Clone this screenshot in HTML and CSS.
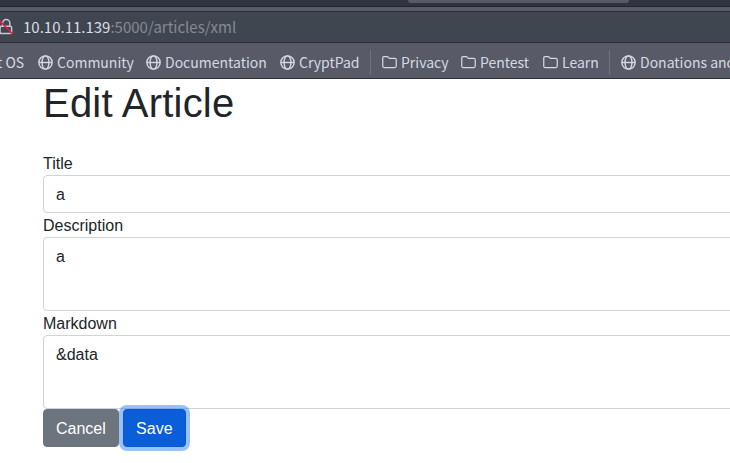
FILE: index.html
```
<!DOCTYPE html>
<html lang="en">
<head>
<meta charset="utf-8">
<title>Edit Article</title>
<link rel="stylesheet" href="styles.css">
</head>
<body>
<svg width="0" height="0" class="defs">
  <symbol id="globe" viewBox="0 0 16 16"><g fill="none" stroke="currentColor" stroke-width="1.5"><circle cx="8" cy="8" r="7.1"/><ellipse cx="8" cy="8" rx="3.7" ry="7.1"/><path d="M1 8h14"/></g></symbol>
  <symbol id="folder" viewBox="0 0 16 16"><path fill="none" stroke="currentColor" stroke-width="1.3" stroke-linejoin="round" d="M2.2 1.8h3.2c.7 0 1 .2 1.4.7l1 1.1h5.8c1 0 1.6.6 1.6 1.6v6.6c0 1-.6 1.6-1.6 1.6H2.4c-1 0-1.6-.6-1.6-1.6V3.2c0-.9.5-1.4 1.4-1.4z"/></symbol>
</svg>
<header class="browser">
  <div class="tabs"><div class="tab"></div></div>
  <div class="strip"></div>
  <div class="address">
    <svg class="lock" viewBox="0 0 14 18"><g fill="none" stroke="#c3c8d3" stroke-width="1.5"><path d="M2.6 8V5.2a3.6 3.6 0 0 1 7.2 0V8"/><rect x="0" y="8.2" width="11.6" height="7.4" rx="1.5"/></g><path d="M-2 1L12.8 16.2" stroke="#f0143c" stroke-width="1.5"/></svg>
    <span class="url"><b>10.10.11.139</b>:5000/articles/xml</span>
  </div>
  <nav class="bookmarks">
    <span class="item os">t OS</span>
    <span class="item community"><svg><use href="#globe"/></svg>Community</span>
    <span class="item documentation"><svg><use href="#globe"/></svg>Documentation</span>
    <span class="item cryptpad"><svg><use href="#globe"/></svg>CryptPad</span>
    <span class="separator"></span>
    <span class="item privacy"><svg><use href="#folder"/></svg>Privacy</span>
    <span class="item pentest"><svg><use href="#folder"/></svg>Pentest</span>
    <span class="item learn"><svg><use href="#folder"/></svg>Learn</span>
    <span class="separator"></span>
    <span class="item"><svg><use href="#globe"/></svg>Donations and</span>
  </nav>
</header>
<main>
  <h1>Edit Article</h1>
  <form>
    <label for="title">Title</label>
    <input id="title" type="text" value="a">
    <label for="description">Description</label>
    <textarea id="description">a</textarea>
    <label for="markdown">Markdown</label>
    <textarea id="markdown">&amp;data</textarea>
    <div class="actions">
      <a class="btn cancel">Cancel</a>
      <button class="btn save" type="button">Save</button>
    </div>
  </form>
</main>
</body>
</html>
```
FILE: styles.css
```
* { box-sizing: border-box; }
html, body { margin: 0; overflow: hidden; }
body {
  height: 463px;
  background: #fff;
  color: #212529;
  font: 16px/24px "Liberation Sans", Arial, sans-serif;
}
.defs { display: block; }
.browser {
  font-family: "Noto Sans CJK SC", "Noto Sans", sans-serif;
  color: #d3dae3;
}
.tabs { height: 7px; background: #2f343f; border-bottom: 1px solid #22252e; }
.tab {
  width: 221px;
  height: 3px;
  margin-left: 408px;
  background: #585a67;
  border-radius: 0 0 3px 3px;
}
.strip { height: 5px; background: #585a67; border-bottom: 1px solid #2b2e39; }
.address {
  display: flex;
  align-items: center;
  height: 31px;
  background: #404650;
  border-bottom: 1px solid #2b2e39;
}
.lock { width: 14px; height: 18px; margin-right: 9px; flex: none; overflow: visible; }
.url { font-size: 15px; color: #858a94; white-space: nowrap; }
.url b { font-weight: 400; color: #d8dde6; }
.bookmarks {
  display: flex;
  align-items: center;
  height: 36px;
  padding-top: 3px;
  background: #585a67;
  border-bottom: 1px solid #2b2e39;
  font-size: 14px;
  white-space: nowrap;
}
.item { display: flex; align-items: center; flex: none; gap: 4px; }
.item svg { width: 15px; height: 15px; flex: none; }
.os { width: 38px; text-indent: -3px; }
.community { width: 108px; }
.documentation { width: 134px; }
.cryptpad { width: 90px; }
.privacy { width: 79px; }
.pentest { width: 82px; }
.learn { width: 66px; }
.separator { width: 1px; height: 25px; margin-right: 11px; flex: none; background: #70727e; }
main { width: 100%; padding-left: 43px; overflow: hidden; }
h1 { margin: 0 0 24px; font-size: 40px; font-weight: 400; line-height: 48px; letter-spacing: .2px; }
form { display: flex; flex-direction: column; width: 1000px; }
label { height: 24px; padding-top: 1px; }
input, textarea {
  display: block;
  width: 100%;
  height: 38px;
  margin: 0;
  padding: 7px 12px 5px;
  border: 1px solid #ced4da;
  border-radius: 4px;
  background: #fff;
  color: #212529;
  font: inherit;
  resize: none;
  overflow: hidden;
}
textarea { height: 74px; }
.actions { display: flex; gap: 4px; padding-bottom: 10px; }
.btn {
  height: 38px;
  padding: 7px 12px 5px;
  border: 1px solid #6c757d;
  border-radius: 4px;
  background: #6c757d;
  color: #fff;
  font: inherit;
}
.save {
  width: 63px;
  background: #0b5ed7;
  border-color: #0a58ca;
  box-shadow: 0 0 0 4px rgba(49, 132, 253, .5);
}
```
